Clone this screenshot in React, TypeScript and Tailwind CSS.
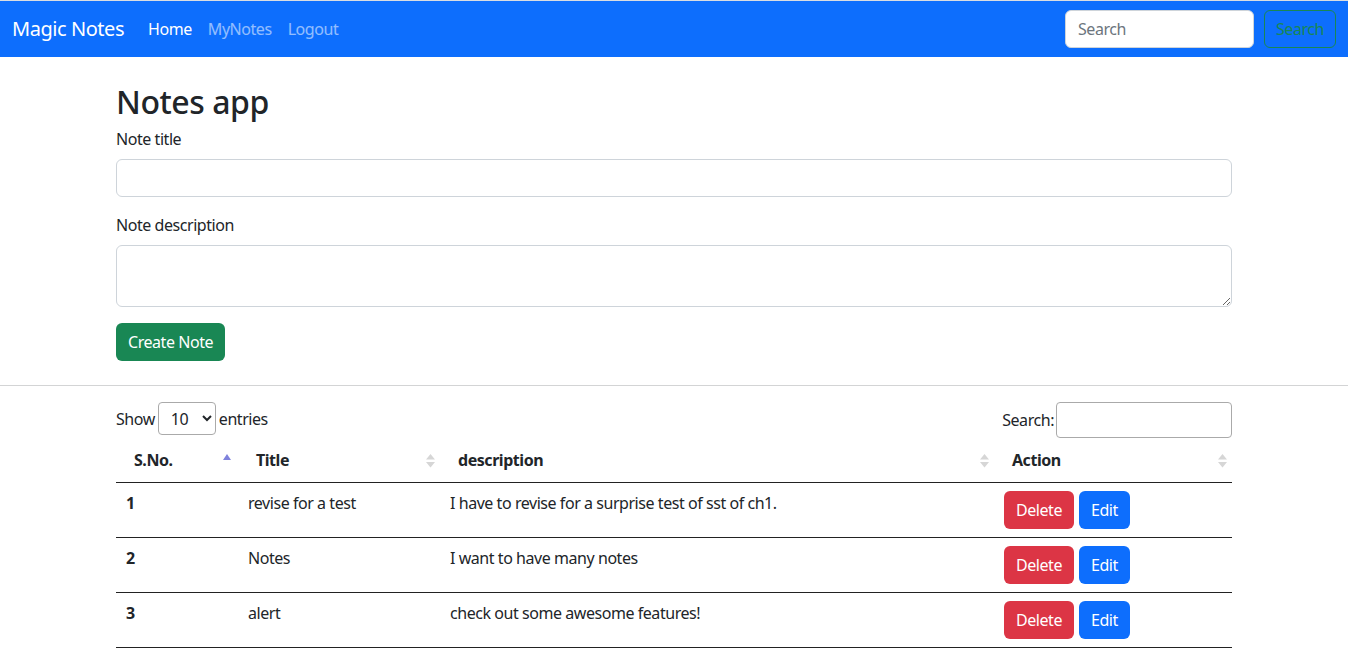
import { ReactNode } from "react";

const notes = [
  { sno: 1, title: "revise for a test", desc: "I have to revise for a surprise test of sst of ch1." },
  { sno: 2, title: "Notes", desc: "I want to have many notes" },
  { sno: 3, title: "alert", desc: "check out some awesome features!" },
];

function SortIcon({ active }: { active?: boolean }) {
  if (active) {
    return (
      <svg width="10" height="10" viewBox="0 0 10 10" className="absolute right-[6px] top-[15px]">
        <path d="M1 7 L5 1 L9 7 Z" fill="#7f82dc" />
      </svg>
    );
  }
  return (
    <svg width="11" height="16" viewBox="0 0 11 16" className="absolute right-[4px] top-[15px]">
      <path d="M1 6.5 L5.5 1 L10 6.5 Z" fill="#d6d6d6" />
      <path d="M1 9 L5.5 14.5 L10 9 Z" fill="#d6d6d6" />
    </svg>
  );
}

function Th({ children, w, active }: { children: ReactNode; w: string; active?: boolean }) {
  return (
    <th className={`relative ${w} h-[44px] px-[18px] py-[10px] text-left font-bold border-b border-[#222]`}>
      {children}
      <SortIcon active={active} />
    </th>
  );
}

export default function App() {
  return (
    <div className="font-['Noto_Sans','Open_Sans',sans-serif] tracking-[-0.028em] text-[16px] text-[#212529] bg-white">
      {/* navbar */}
      <div className="h-px bg-[#d9dde2]" />
      <nav className="h-[56px] bg-[#0d6efd] flex items-center px-[12px]">
        <span className="text-white text-[20px] mr-[16px]">Magic Notes</span>
        <ul className="flex">
          <li className="px-[8px] text-white">Home</li>
          <li className="px-[8px] text-white/55">MyNotes</li>
          <li className="px-[8px] text-white/55">Logout</li>
        </ul>
        <div className="ml-auto flex items-center">
          <input
            placeholder="Search"
            className="w-[189px] h-[38px] bg-white rounded-[6px] border border-[#ced4da] px-[12px] mr-[10px] placeholder:text-[#6c757d] outline-none"
          />
          <button className="h-[38px] w-[72px] rounded-[6px] border border-[#198754] text-[#198754]">Search</button>
        </div>
      </nav>

      {/* form */}
      <div className="w-[1116px] mx-auto pt-[26px]">
        <h2 className="text-[32px] leading-[38px] font-medium mb-[6px]">Notes app</h2>
        <label className="block leading-6 mb-[8px]">Note title</label>
        <input className="block w-full h-[38px] rounded-[6px] border border-[#ced4da] px-3 mb-4 outline-none" />
        <label className="block leading-6 mb-[8px]">Note description</label>
        <textarea rows={2} className="block w-full h-[62px] rounded-[6px] border border-[#ced4da] px-3 py-[6px] mb-4 outline-none" />
        <button className="h-[38px] px-[12px] rounded-[6px] bg-[#198754] text-white">Create Note</button>
      </div>

      <hr className="mt-[24px] border-0 h-px bg-[#d3d4d5]" />

      {/* table */}
      <div className="w-[1116px] mx-auto pt-[16px]">
        <div className="flex justify-between items-start">
          <div className="flex items-center h-[33px]">
            <span>Show</span>
            <select className="mx-[3px] w-[58px] h-[33px] rounded-[4px] border border-[#aaa] px-[8px] bg-white">
              <option>10</option>
            </select>
            <span>entries</span>
          </div>
          <div className="flex items-center">
            <span className="mr-[2px]">Search:</span>
            <input className="w-[176px] h-[36px] rounded-[4px] border border-[#aaa] outline-none" />
          </div>
        </div>

        <table className="w-full border-collapse table-fixed">
          <thead>
            <tr>
              <Th w="w-[122px]" active>S.No.</Th>
              <Th w="w-[202px]">Title</Th>
              <Th w="w-[554px]">description</Th>
              <Th w="w-[238px]">Action</Th>
            </tr>
          </thead>
          <tbody>
            {notes.map((n) => (
              <tr key={n.sno} className="border-b border-[#222] align-top">
                <td className="px-[10px] py-[8px] font-bold">{n.sno}</td>
                <td className="px-[10px] py-[8px]">{n.title}</td>
                <td className="px-[10px] py-[8px]">{n.desc}</td>
                <td className="px-[10px] py-[8px]">
                  <div className="flex gap-[5px] h-[38px]">
                    <button className="h-[38px] px-[12px] rounded-[6px] bg-[#dc3545] text-white">Delete</button>
                    <button className="h-[38px] px-[12px] rounded-[6px] bg-[#0d6efd] text-white">Edit</button>
                  </div>
                </td>
              </tr>
            ))}
          </tbody>
        </table>
      </div>
    </div>
  );
}
